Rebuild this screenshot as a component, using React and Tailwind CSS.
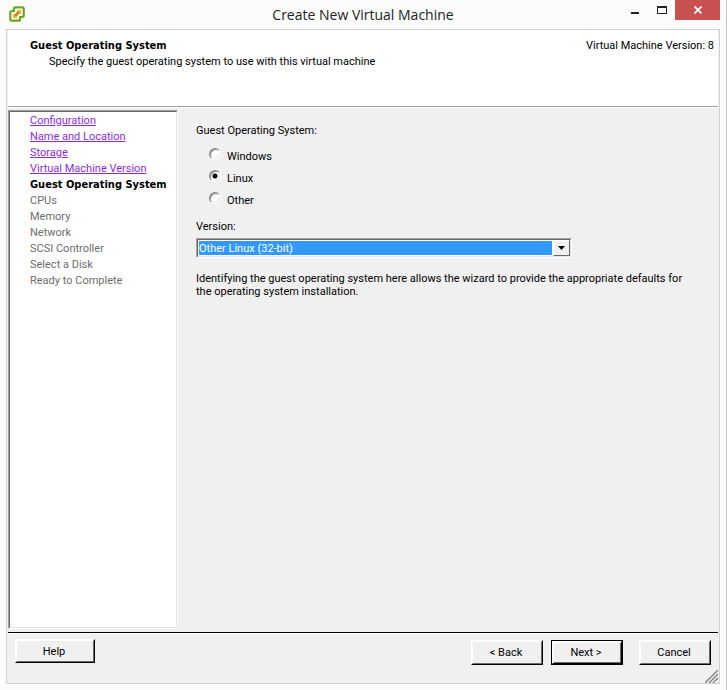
import { useState } from 'react';

const steps = [
  { name: 'Configuration', state: 'done' },
  { name: 'Name and Location', state: 'done' },
  { name: 'Storage', state: 'done' },
  { name: 'Virtual Machine Version', state: 'done' },
  { name: 'Guest Operating System', state: 'current' },
  { name: 'CPUs', state: 'todo' },
  { name: 'Memory', state: 'todo' },
  { name: 'Network', state: 'todo' },
  { name: 'SCSI Controller', state: 'todo' },
  { name: 'Select a Disk', state: 'todo' },
  { name: 'Ready to Complete', state: 'todo' },
];

const versions = {
  Windows: ['Microsoft Windows Server 2008 R2 (64-bit)'],
  Linux: ['Other Linux (32-bit)', 'Other Linux (64-bit)'],
  Other: ['Other (32-bit)', 'Other (64-bit)'],
};

function AppLogo() {
  return (
    <svg viewBox="0 0 16 16" className="h-4 w-4" aria-hidden="true">
      <path
        d="M6.500 1.300h6.700Q14.700 1.300 14.700 2.800V9.500Q14.700 11 13.200 11H11v2.200Q11 14.700 9.500 14.700H2.800Q1.300 14.700 1.300 13.200V6.500Q1.300 5 2.800 5H5V2.800Q5 1.300 6.500 1.300z"
        fill="#fff"
        stroke="#6aa524"
        strokeWidth="2.200"
      />
      <path d="M8 4h4v4H9.500V6.500H8z" fill="#f2b030" />
      <path d="M4 8h2.500v1.500H8V12H4z" fill="#f2b030" />
      <path d="M8 6h2v2L8 10H6V8z" fill="#c9801a" />
    </svg>
  );
}

function TitleBar() {
  return (
    <header className="flex h-[29px] items-start pr-[6px]">
      <div className="w-[101px] pt-[6px] pl-[9px]">
        <AppLogo />
      </div>
      <h1 className="flex-1 pl-1 text-center font-['Open_Sans',sans-serif] text-[14px] leading-[29px] text-[#222]">
        Create New Virtual Machine
      </h1>
      <div className="flex">
        <button type="button" aria-label="Minimize" className="flex h-5 w-[27px] items-center justify-center">
          <svg viewBox="0 0 8 12" className="h-3 w-2" fill="#222">
            <path d="M0 8h8v2H0z" />
          </svg>
        </button>
        <button type="button" aria-label="Maximize" className="flex h-5 w-[27px] items-center justify-center">
          <svg viewBox="0 0 10 8" className="h-2 w-[10px]" fill="#222">
            <path d="M0 0h10v8H0zM1 2v5h8V2z" fillRule="evenodd" />
          </svg>
        </button>
        <button type="button" aria-label="Close" className="flex h-5 w-[45px] items-center justify-center bg-[#c75050]">
          <svg viewBox="0 0 8 8" className="h-2 w-2" stroke="#fff" strokeWidth="1.700">
            <path d="M.5.5l7 7M7.500.5l-7 7" />
          </svg>
        </button>
      </div>
    </header>
  );
}

function WizardHeader() {
  return (
    <div className="mx-px flex h-[77px] items-start justify-between border-b border-[#a0a0a0] bg-white pt-2 pr-1 pl-[22px]">
      <div>
        <h2 className="font-['DejaVu_Sans_Condensed',sans-serif] font-bold">Guest Operating System</h2>
        <p className="pl-[19px]">Specify the guest operating system to use with this virtual machine</p>
      </div>
      <p>Virtual Machine Version: 8</p>
    </div>
  );
}

function StepList() {
  return (
    <nav className="w-[170px] shrink-0 border border-t-[#a0a0a0] border-r-white border-b-white border-l-[#a0a0a0]">
      <ul className="h-full border border-t-[#696969] border-r-[#e3e3e3] border-b-[#e3e3e3] border-l-[#696969] bg-white pt-px pl-5 whitespace-nowrap">
        {steps.map((step) => (
          <li key={step.name} className="h-4">
            {step.state === 'done' && (
              <a href="#" className="text-[#8a2be2] underline">{step.name}</a>
            )}
            {step.state === 'current' && (
              <span className="font-['DejaVu_Sans_Condensed',sans-serif] font-bold">{step.name}</span>
            )}
            {step.state === 'todo' && <span className="text-[#6d6d6d]">{step.name}</span>}
          </li>
        ))}
      </ul>
    </nav>
  );
}

function GuestForm() {
  const [family, setFamily] = useState('Linux');

  return (
    <form className="flex-1 pt-[13px] pr-[30px] pl-[18px]">
      <fieldset>
        <legend>Guest Operating System:</legend>
        <div className="pt-[6px] pl-[13px]">
          {Object.keys(versions).map((name) => (
            <label key={name} className="flex h-[22px] items-start gap-[6px]">
              <input
                type="radio"
                name="family"
                checked={family === name}
                onChange={() => setFamily(name)}
                className="mt-[3px] h-3 w-3 appearance-none rounded-full border border-t-[#8a8a8a] border-r-white border-b-white border-l-[#8a8a8a] bg-white shadow-[inset_1px_1px_0_#8a8a8a,inset_-1px_-1px_0_#e3e3e3] checked:bg-[radial-gradient(circle,#000_2px,#fff_3px)]"
              />
              <span className="pt-1">{name}</span>
            </label>
          ))}
        </div>
      </fieldset>

      <label htmlFor="version" className="block pt-2">Version:</label>
      <div className="mt-[3px] flex h-5 max-w-[376px] border border-t-[#a0a0a0] border-r-white border-b-white border-l-[#a0a0a0]">
        <div className="flex flex-1 border border-t-[#696969] border-r-[#e3e3e3] border-b-[#e3e3e3] border-l-[#696969] bg-white">
          <select id="version" className="m-px flex-1 appearance-none bg-[#3399ff] pt-px leading-[14px] text-white">
            {versions[family].map((version) => (
              <option key={version}>{version}</option>
            ))}
          </select>
          <span className="flex w-[17px] items-center justify-center border border-t-white border-r-[#696969] border-b-[#696969] border-l-white bg-[#f0f0f0]">
            <svg viewBox="0 0 7 4" className="h-1 w-[7px]">
              <path d="M0 0h7L3.500 4z" />
            </svg>
          </span>
        </div>
      </div>

      <p className="pt-[14px] leading-[13px]">
        Identifying the guest operating system here allows the wizard to provide the appropriate defaults for the
        operating system installation.
      </p>
    </form>
  );
}

function WizardButton({ children, isDefault }) {
  return (
    <button
      type="button"
      className={`h-[25px] w-[72px] border ${
        isDefault ? 'border-black' : 'border-t-white border-r-black border-b-black border-l-white'
      }`}
    >
      <span
        className={`flex h-full items-center justify-center border pt-px pr-[2px] ${
          isDefault
            ? 'border-t-white border-r-black border-b-black border-l-white shadow-[inset_1px_1px_0_#fff,inset_-1px_-1px_0_#696969]'
            : 'border-t-white border-r-[#696969] border-b-[#696969] border-l-white'
        }`}
      >
        {children}
      </span>
    </button>
  );
}

function WizardFooter() {
  return (
    <footer className="relative mx-px mt-[3px] flex h-[51px] items-start border-t border-black pr-[7px] pl-[7px] shadow-[inset_0_1px_0_#fff]">
      <div className="flex flex-1 pt-[6px]">
        <button
          type="button"
          className="h-6 w-20 border border-t-white border-r-black border-b-black border-l-white"
        >
          <span className="flex h-full items-center justify-center border border-t-white border-r-[#696969] border-b-[#696969] border-l-white pt-px pr-[2px]">
            Help
          </span>
        </button>
      </div>
      <div className="flex gap-2 pt-[7px]">
        <WizardButton>&lt; Back</WizardButton>
        <WizardButton isDefault>Next &gt;</WizardButton>
        <div className="pl-2">
          <WizardButton>Cancel</WizardButton>
        </div>
      </div>
      {/* Resize grip */}
      <svg viewBox="0 0 13 13" className="absolute right-0 bottom-0 h-[13px] w-[13px]" stroke="#808080" strokeWidth="1.400">
        <path d="M0 13L13 0M4 13L13 4M8 13L13 8" />
      </svg>
    </footer>
  );
}

export default function App() {
  return (
    <div className="flex min-h-screen flex-col border-r border-[#c4c4c4] bg-[#fcfcfc] font-['Roboto','Liberation_Sans',sans-serif] text-[11px] leading-4 text-black">
      <TitleBar />
      <main className="mr-[6px] mb-[6px] ml-[6px] flex flex-1 flex-col border border-[#d0d0d0] bg-[#f0f0f0]">
        <WizardHeader />
        <div className="ml-px flex flex-1 border-t border-white pt-[2px]">
          <StepList />
          <GuestForm />
        </div>
        <WizardFooter />
      </main>
    </div>
  );
}
